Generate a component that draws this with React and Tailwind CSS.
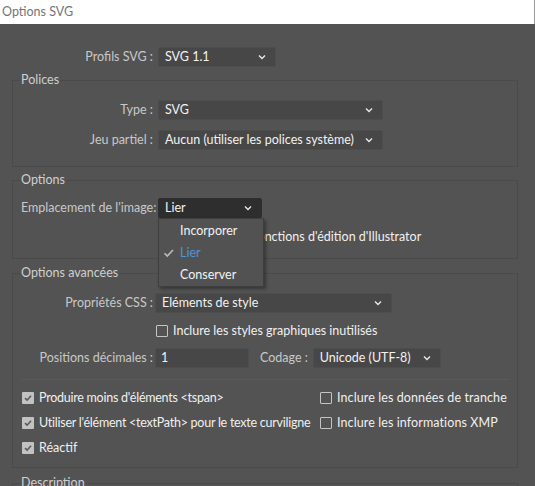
import React from "react";

const font = { fontFamily: 'Lato, "Noto Sans", sans-serif' };

function Chevron() {
  return (
    <svg width="8" height="6" viewBox="0 0 8 6" className="shrink-0">
      <path d="M1 1.5 L4 4.5 L7 1.5" fill="none" stroke="#e8e8e8" strokeWidth="1.4" />
    </svg>
  );
}

function Select({ value, className = "", dark = false }) {
  return (
    <div
      className={`h-[20px] flex items-center justify-between pl-[6px] pr-[9px] border rounded-[2px] text-[#f2f2f2] whitespace-nowrap ${
        dark ? "bg-[#2e2e2e] border-[#2e2e2e]" : "bg-[#474747] border-[#4d4d4d]"
      } ${className}`}
    >
      <span className="leading-none">{value}</span>
      <Chevron />
    </div>
  );
}

function Checkbox({ checked = false }) {
  if (checked) {
    return (
      <div className="w-[12px] h-[12px] shrink-0 bg-[#c2c2c2] rounded-[1px] flex items-center justify-center">
        <svg width="10" height="10" viewBox="0 0 10 10">
          <path d="M2 5.2 L4.1 7.2 L8 2.8" fill="none" stroke="#5a5a5a" strokeWidth="1.6" />
        </svg>
      </div>
    );
  }
  return <div className="w-[12px] h-[12px] shrink-0 border border-[#c4c4c4] rounded-[1px]" />;
}

function Group({ title, className = "", children }) {
  return (
    <fieldset className={`border border-[#4a4a4a] mx-[12px] w-[506px] ${className}`}>
      <legend className="ml-[7px] px-[1px] leading-[16px] text-[#cfcfcf] whitespace-nowrap">{title}</legend>
      {children}
    </fieldset>
  );
}

export default function App() {
  return (
    <div
      className="w-[535px] h-[486px] overflow-hidden bg-[#535353] flex flex-col text-[12.5px] text-[#c8c8c8] whitespace-nowrap"
      style={font}
    >
      <div className="h-[24px] shrink-0 bg-white border-r border-[#9a9a9a] flex items-center pl-[2px] text-[12.5px] text-[#757575]">
        Options SVG
      </div>

      <div className="flex items-center mt-[23px] h-[20px]">
        <span className="w-[156px] text-right pr-[3px]">Profils SVG :</span>
        <Select value="SVG 1.1" className="w-[118px] ml-[2px]" />
      </div>

      <Group title="Polices" className="mt-[5px] pb-[16px]">
        <div className="flex flex-col gap-[10px] pt-[12px]">
          <div className="flex items-center h-[20px]">
            <span className="w-[143px] text-right pr-[3px]">Type :</span>
            <Select value="SVG" className="w-[225px] ml-[2px]" />
          </div>
          <div className="flex items-center h-[20px]">
            <span className="w-[143px] text-right pr-[3px]">Jeu partiel :</span>
            <Select value="Aucun (utiliser les polices système)" className="w-[225px] ml-[2px]" />
          </div>
        </div>
      </Group>

      <Group title="Options" className="mt-[5px] pb-[13px]">
        <div className="pt-[10px]">
          <div className="flex items-center h-[20px]">
            <span className="w-[145px] pl-[8px]">Emplacement de l'image:</span>
            <div className="relative">
              <Select value="Lier" dark className="w-[104px]" />
              <div className="absolute left-0 top-[20px] w-[106px] h-[69px] bg-[#525252] border border-[#3e3e3e] shadow-[2px_2px_3px_rgba(0,0,0,0.35)] z-10 flex flex-col pt-[1px] text-[#f2f2f2]">
                <div className="h-[22px] flex items-center pl-[21px]">Incorporer</div>
                <div className="h-[22px] flex items-center pl-[4px] text-[#4a97dc]">
                  <svg width="12" height="10" viewBox="0 0 12 10" className="mr-[5px]">
                    <path d="M1.5 5.2 L4.3 8 L10 2" fill="none" stroke="#bdbdbd" strokeWidth="1.6" />
                  </svg>
                  Lier
                </div>
                <div className="h-[22px] flex items-center pl-[21px]">Conserver</div>
              </div>
            </div>
          </div>
          <div className="flex items-center h-[16px] mt-[11px] pl-[145px] gap-[6px] text-[#f0f0f0]">
            <Checkbox />
            <span>Conserver les fonctions d'édition d'Illustrator</span>
          </div>
        </div>
      </Group>

      <Group title="Options avancées" className="mt-[6px] pb-[11px]">
        <div className="pt-[12px] flex flex-col">
          <div className="flex items-center h-[20px]">
            <span className="w-[142px] text-right pr-[2px]">Propriétés CSS :</span>
            <Select value="Eléments de style" className="w-[237px]" />
          </div>
          <div className="flex items-center h-[16px] mt-[10px] pl-[143px] gap-[5px] text-[#f0f0f0]">
            <Checkbox />
            <span>Inclure les styles graphiques inutilisés</span>
          </div>
          <div className="flex items-center h-[20px] mt-[9px]">
            <span className="w-[142px] text-right pr-[2px]">Positions décimales :</span>
            <div className="w-[94px] h-[20px] bg-[#474747] border border-[#4d4d4d] rounded-[2px] flex items-center pl-[5px] text-[#f2f2f2]">
              1
            </div>
            <span className="ml-[11px] mr-[5px]">Codage :</span>
            <Select value="Unicode (UTF-8)" className="w-[128px]" />
          </div>
          <div className="mx-[8px] mt-[11px] h-[1px] bg-[#4a4a4a] border-b border-[#5a5a5a]" />
          <div className="grid grid-cols-[298px_1fr] gap-y-[9px] mt-[10px] pl-[9px] text-[#f0f0f0]">
            <div className="flex items-center gap-[5px] h-[16px] tracking-[-0.25px]">
              <Checkbox checked />
              <span>Produire moins d'éléments &lt;tspan&gt;</span>
            </div>
            <div className="flex items-center gap-[5px] h-[16px] tracking-[0.1px]">
              <Checkbox />
              <span>Inclure les données de tranche</span>
            </div>
            <div className="flex items-center gap-[5px] h-[16px] tracking-[-0.25px]">
              <Checkbox checked />
              <span>Utiliser l'élément &lt;textPath&gt; pour le texte curviligne</span>
            </div>
            <div className="flex items-center gap-[5px] h-[16px] tracking-[0.1px]">
              <Checkbox />
              <span>Inclure les informations XMP</span>
            </div>
            <div className="flex items-center gap-[5px] h-[16px]">
              <Checkbox checked />
              <span>Réactif</span>
            </div>
          </div>
        </div>
      </Group>

      <Group title="Description" className="mt-[7px] h-[60px] shrink-0" />
    </div>
  );
}
